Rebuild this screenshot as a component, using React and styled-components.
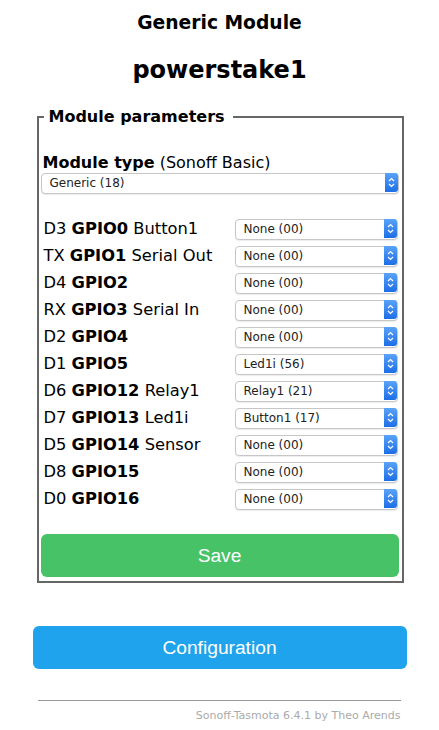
import React from "react";
import styled, { createGlobalStyle } from "styled-components";

const Global = createGlobalStyle`
  html, body { margin: 0; padding: 0; background: #fff; }
  body { font-family: "DejaVu Sans", Verdana, sans-serif; color: #000; }
`;

const Page = styled.div`
  width: 374px;
  margin: 0 auto;
  padding-top: 12px;
`;

const Title = styled.h3`
  margin: 0;
  text-align: center;
  font-size: 18.72px;
  line-height: 22px;
  font-weight: bold;
`;

const Host = styled.h2`
  margin: 22px 0 0;
  text-align: center;
  font-size: 24px;
  line-height: 28px;
  font-weight: bold;
`;

const Fieldset = styled.fieldset`
  margin: 23px 3px 0 4px;
  padding: 0 3px 4px 2px;
  border: 2px solid #666;
  min-width: 0;
`;

const Legend = styled.legend`
  margin-left: 3px;
  padding: 0 8px 0 5px;
  font-size: 16px;
  line-height: 19px;
  font-weight: bold;
`;

const TypeLabel = styled.div`
  margin-top: 27px;
  font-size: 16px;
  line-height: 20px;
  padding-left: 2px;
`;

const SelectWrap = styled.div`
  position: relative;
  width: ${(p) => p.$width || "100%"};
  height: 21px;
  margin-top: ${(p) => p.$mt || 0}px;
`;

const Select = styled.select`
  appearance: none;
  -webkit-appearance: none;
  width: 100%;
  height: 100%;
  box-sizing: border-box;
  border: 1px solid #c6c6c6;
  border-radius: 4px;
  background: #fff;
  padding: 0 18px 0 8px;
  font-family: "DejaVu Sans", "Lucida Grande", sans-serif;
  font-size: 12px;
  color: #222;
  box-shadow: 0 1px 1px rgba(0, 0, 0, 0.08);
  outline: none;
`;

const ArrowBox = styled.span`
  position: absolute;
  top: 1px;
  right: 1px;
  bottom: 1px;
  width: 13px;
  border-radius: 0 3px 3px 0;
  background: linear-gradient(#5aa3f8, #1c6ee6);
  display: flex;
  align-items: center;
  justify-content: center;
  pointer-events: none;
`;

const Rows = styled.div`
  margin-top: 25px;
  display: flex;
  flex-direction: column;
  gap: 6px;
`;

const Row = styled.div`
  display: flex;
  align-items: center;
  height: 21px;
`;

const Label = styled.div`
  width: 194px;
  padding-left: 3px;
  box-sizing: border-box;
  font-size: 16.3px;
  line-height: 20px;
  white-space: nowrap;
`;

const Button = styled.button`
  display: block;
  width: 100%;
  height: 43px;
  border: 0;
  border-radius: 6px;
  background: ${(p) => p.$bg};
  color: #fff;
  font-family: "Liberation Sans", Arial, sans-serif;
  font-size: 19.2px;
  line-height: 43px;
  padding: 0;
  margin-top: ${(p) => p.$mt}px;
`;

const Rule = styled.hr`
  margin: 31px 6px 0 5px;
  border: 0;
  border-top: 1px solid #999;
  height: 0;
`;

const Footer = styled.div`
  text-align: right;
  margin: 8px 6px 0 0;
  font-size: 11px;
  color: #aaa;
`;

function Arrow() {
  return (
    <svg width="7" height="11" viewBox="0 0 7 11">
      <path d="M1 4 L3.5 1.5 L6 4 M1 7 L3.5 9.5 L6 7" fill="none" stroke="#fff" strokeWidth="1.2" />
    </svg>
  );
}

function Dropdown({ value, width, mt }) {
  return (
    <SelectWrap $width={width} $mt={mt}>
      <Select defaultValue={value}>
        <option value={value}>{value}</option>
      </Select>
      <ArrowBox>
        <Arrow />
      </ArrowBox>
    </SelectWrap>
  );
}

const rows = [
  ["D3", "GPIO0", "Button1", "None (00)"],
  ["TX", "GPIO1", "Serial Out", "None (00)"],
  ["D4", "GPIO2", "", "None (00)"],
  ["RX", "GPIO3", "Serial In", "None (00)"],
  ["D2", "GPIO4", "", "None (00)"],
  ["D1", "GPIO5", "", "Led1i (56)"],
  ["D6", "GPIO12", "Relay1", "Relay1 (21)"],
  ["D7", "GPIO13", "Led1i", "Button1 (17)"],
  ["D5", "GPIO14", "Sensor", "None (00)"],
  ["D8", "GPIO15", "", "None (00)"],
  ["D0", "GPIO16", "", "None (00)"],
];

export default function App() {
  return (
    <>
      <Global />
      <Page>
        <Title>Generic Module</Title>
        <Host>powerstake1</Host>
        <Fieldset>
          <Legend>Module parameters</Legend>
          <TypeLabel>
            <b>Module type</b> (Sonoff Basic)
          </TypeLabel>
          <Dropdown value="Generic (18)" mt={-1} />
          <Rows>
            {rows.map(([pin, gpio, fn, val]) => (
              <Row key={gpio}>
                <Label>
                  {pin} <b>{gpio}</b>
                  {fn ? " " + fn : ""}
                </Label>
                <Dropdown value={val} width="163px" />
              </Row>
            ))}
          </Rows>
          <Button $bg="#47c266" $mt={25}>Save</Button>
        </Fieldset>
        <Button $bg="#1fa3ec" $mt={43}>Configuration</Button>
        <Rule />
        <Footer>Sonoff-Tasmota 6.4.1 by Theo Arends</Footer>
      </Page>
    </>
  );
}
